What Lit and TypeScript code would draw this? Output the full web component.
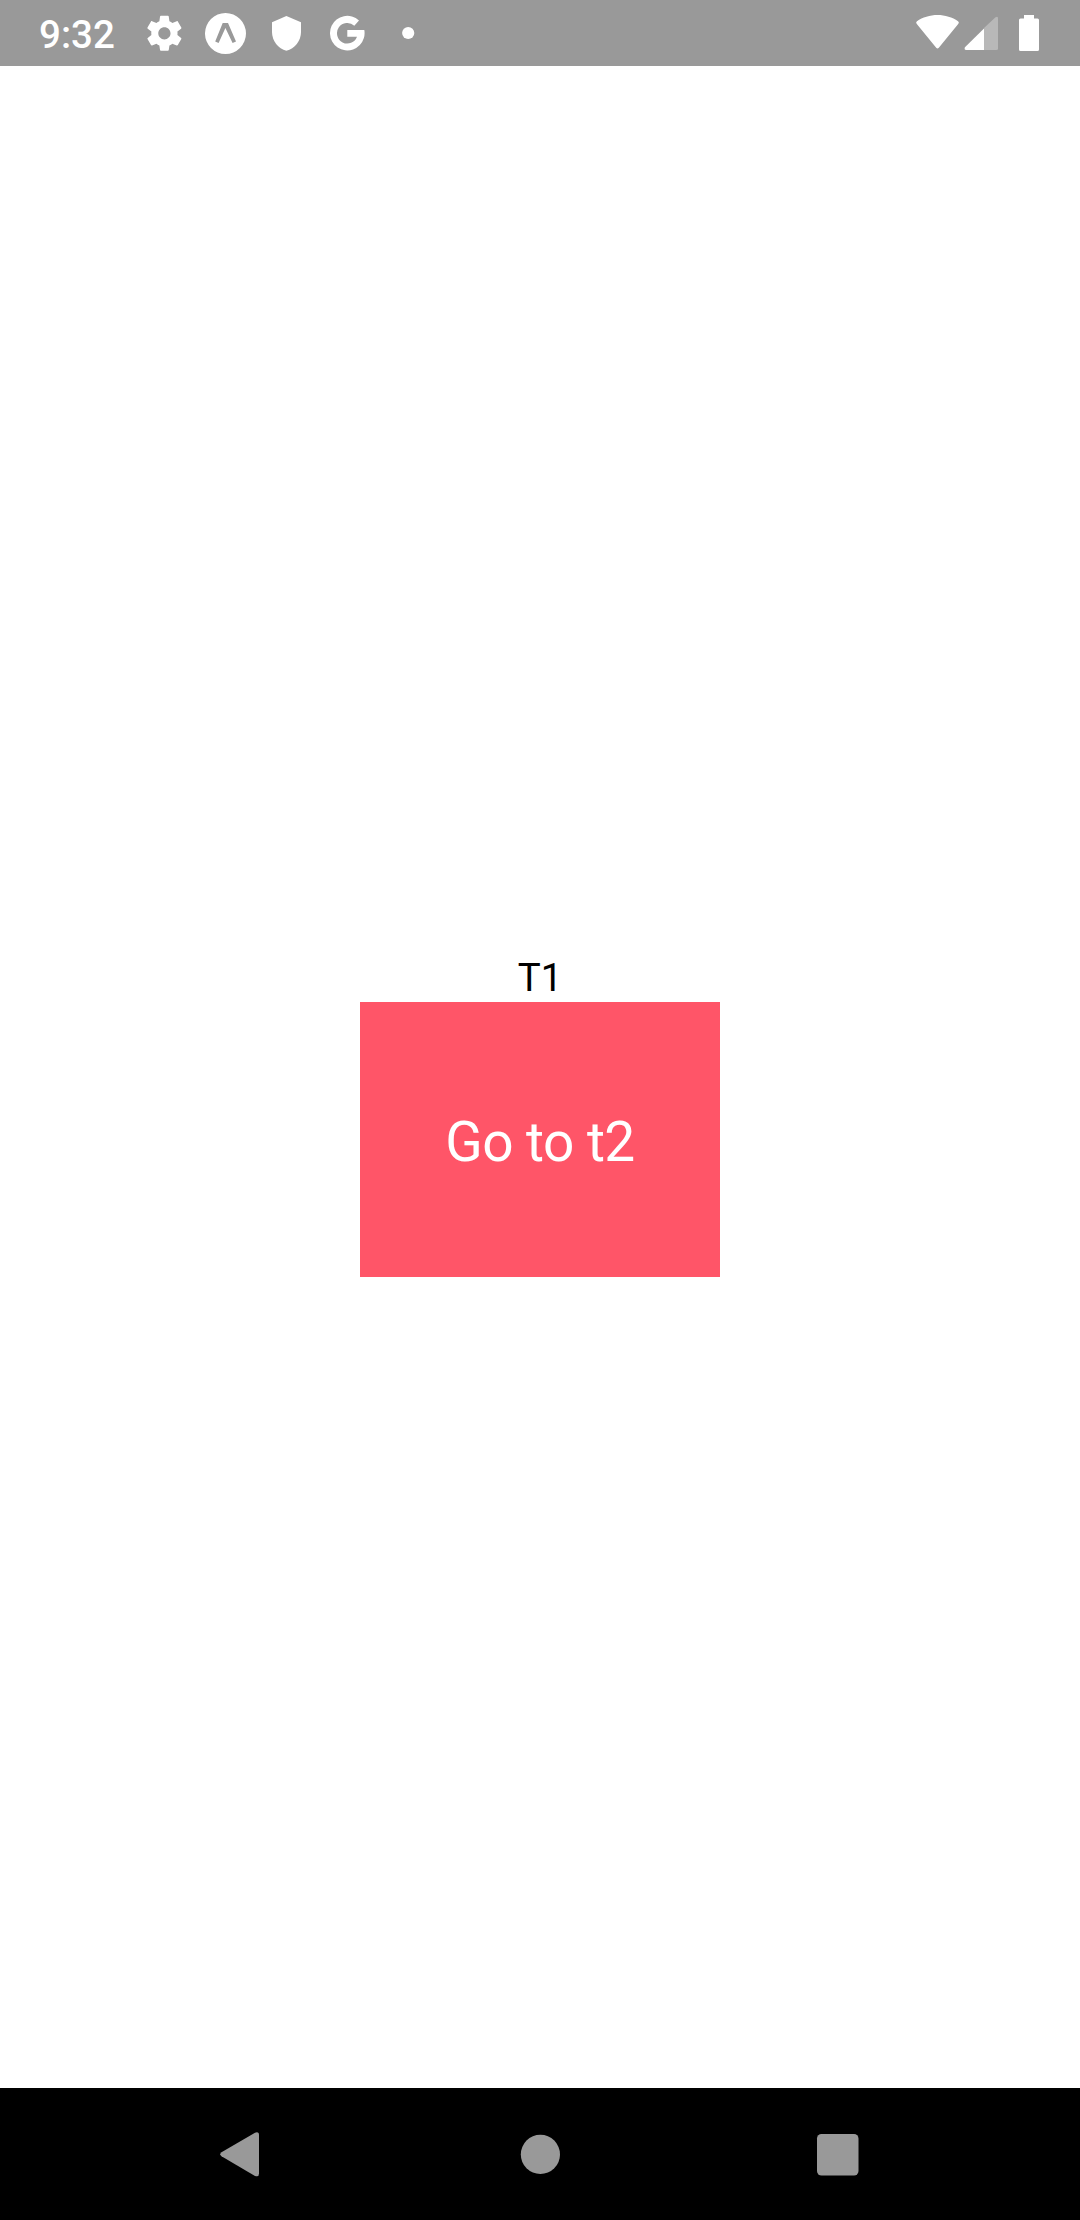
import { LitElement, html, css } from "lit";
import { customElement } from "lit/decorators.js";

@customElement("status-bar")
class StatusBar extends LitElement {
  static styles = css`
    :host {
      display: flex;
      box-sizing: border-box;
      height: 66px;
      padding: 13px 41px 12px 39px;
      background: #999;
      color: #fff;
      justify-content: space-between;
      align-items: center;
    }
    .group {
      display: flex;
      align-items: center;
      gap: 20px;
    }
    .time {
      width: 85px;
      padding-top: 2px;
      font: 500 38.5px/39px Roboto, sans-serif;
      white-space: nowrap;
    }
    .system {
      gap: 5px;
    }
    svg {
      display: block;
      fill: currentColor;
    }
    .battery {
      margin-left: 16px;
    }
  `;

  render() {
    return html`
      <div class="group">
        <span class="time">9:32</span>
        <svg width="41" height="41" viewBox="0 0 41 41">
          <path transform="translate(-.6 -.7) scale(1.75)" d="M19.43 12.98c.04-.32.07-.64.07-.98s-.03-.66-.07-.98l2.11-1.65c.19-.15.24-.42.12-.64l-2-3.46c-.12-.22-.39-.3-.61-.22l-2.49 1c-.52-.4-1.08-.73-1.69-.98l-.38-2.65C14.46 2.18 14.25 2 14 2h-4c-.25 0-.46.18-.49.42l-.38 2.65c-.61.25-1.17.59-1.69.98l-2.49-1c-.23-.09-.49 0-.61.22l-2 3.46c-.13.22-.07.49.12.64l2.11 1.65c-.04.32-.07.65-.07.98s.03.66.07.98l-2.11 1.65c-.19.15-.24.42-.12.64l2 3.46c.12.22.39.3.61.22l2.49-1c.52.4 1.08.73 1.69.98l.38 2.65c.03.24.24.42.49.42h4c.25 0 .46-.18.49-.42l.38-2.65c.61-.25 1.17-.59 1.69-.98l2.49 1c.23.09.49 0 .61-.22l2-3.46c.12-.22.07-.49-.12-.64l-2.11-1.65zM12 15.5c-1.93 0-3.5-1.57-3.5-3.5s1.57-3.5 3.5-3.5 3.5 1.57 3.5 3.5-1.57 3.5-3.5 3.5z"/>
        </svg>
        <svg width="41" height="41" viewBox="0 0 41 41">
          <path fill-rule="evenodd" d="M20.5 0a20.5 20.5 0 1 0 0 41a20.5 20.5 0 0 0 0-41zM17.7 10H23L31 28.4L27.6 30L20.4 15L13.6 30L10.2 28.4z"/>
        </svg>
        <svg width="41" height="41" viewBox="0 0 41 41">
          <path d="M20.4 3L35 9.2V19C35 28 28.7 35.6 20.4 37.8C12.2 35.6 6 28 6 19V9.2z"/>
        </svg>
        <svg width="41" height="41" viewBox="0 0 41 41">
          <path d="M32 7.4A17.3 17.3 0 1 0 37.3 17H20.3V23.7H30A10.3 10.3 0 1 1 27.3 12.7z"/>
        </svg>
        <svg width="41" height="41" viewBox="0 0 41 41">
          <circle cx="20.2" cy="20" r="6.1"/>
        </svg>
      </div>
      <div class="group system">
        <svg width="43" height="41" viewBox="0 0 43 41">
          <path d="M1 11.2C-.1 10-.1 9 1 8.2C6.5 4.300 14 2 21.5 2S36.5 4.300 42 8.2C43.100 9 43.100 10 42 11.2L22.800 34.700Q21.500 36.200 20.200 34.700z"/>
        </svg>
        <svg width="34" height="41" viewBox="0 0 34 41">
          <path fill="#b8b8b8" d="M20 15L31.500 4.200Q34 2.800 34 5.200V35.500Q34 37 32.500 37H20z"/>
          <path d="M20 15.500V37H2Q.2 37 .6 35Q.7 34.600 1.200 34.100z"/>
        </svg>
        <svg class="battery" width="20" height="41" viewBox="0 0 20 41">
          <path d="M5 2H15V5.400H18.500Q20 5.400 20 6.900V36.500Q20 38 18.500 38H1.500Q0 38 0 36.500V6.900Q0 5.400 1.500 5.400H5z"/>
        </svg>
      </div>
    `;
  }
}

@customElement("nav-bar")
class NavBar extends LitElement {
  static styles = css`
    :host {
      display: grid;
      grid-template-columns: repeat(3, 300px);
      justify-content: center;
      align-items: center;
      justify-items: center;
      height: 132px;
      background: #000;
    }
    svg {
      display: block;
      fill: #999;
    }
  `;

  render() {
    return html`
      <svg width="60" height="60" viewBox="0 0 60 60">
        <path d="M11.500 32.300Q9 30.300 11.500 28.300L45 8.700Q49 7.200 49 11V49.600Q49 53.400 45 51.900z"/>
      </svg>
      <svg width="60" height="60" viewBox="0 0 60 60">
        <circle cx="30.400" cy="30.400" r="19.600"/>
      </svg>
      <svg width="60" height="60" viewBox="0 0 60 60">
        <rect x="7" y="10" width="41.500" height="41.500" rx="4.500"/>
      </svg>
    `;
  }
}

@customElement("app-root")
class AppRoot extends LitElement {
  static styles = css`
    :host {
      display: flex;
      flex-direction: column;
      height: 2220px;
      background: #fff;
      font-family: Roboto, sans-serif;
    }
    .screen {
      flex: 1;
      display: flex;
      flex-direction: column;
      align-items: center;
      justify-content: center;
      padding-top: 74px;
    }
    .title {
      padding-top: 2px;
      font-size: 38.5px;
      line-height: 49px;
      color: #000;
    }
    .button {
      display: flex;
      box-sizing: border-box;
      align-items: center;
      justify-content: center;
      width: 360px;
      height: 275px;
      padding: 5px 0 0;
      border: 0;
      background: #ff5568;
      color: #fff;
      font: 400 55px/64px Roboto, sans-serif;
      letter-spacing: -0.55px;
    }
  `;

  render() {
    return html`
      <status-bar></status-bar>
      <main class="screen">
        <div class="title">T1</div>
        <button class="button">Go to t2</button>
      </main>
      <nav-bar></nav-bar>
    `;
  }
}
